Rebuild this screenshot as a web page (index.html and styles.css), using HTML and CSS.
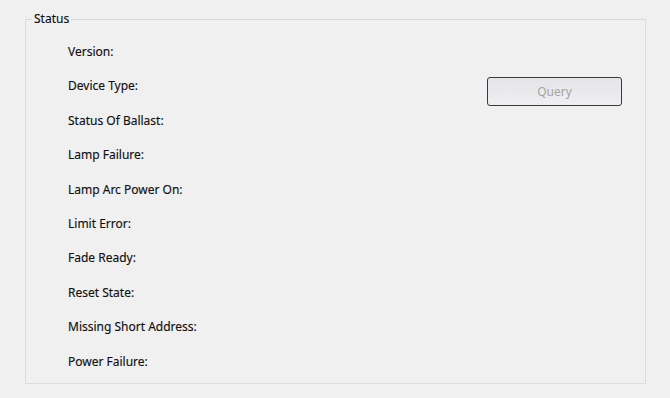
FILE: index.html
```html
<!DOCTYPE html>
<html>
<head>
<meta charset="utf-8">
<link rel="stylesheet" href="styles.css">
</head>
<body>
<div class="page">
  <fieldset class="status">
    <legend class="status-title">Status</legend>
    <div class="status-body">
      <ul class="fields">
        <li>Version:</li>
        <li>Device Type:</li>
        <li>Status Of Ballast:</li>
        <li>Lamp Failure:</li>
        <li>Lamp Arc Power On:</li>
        <li>Limit Error:</li>
        <li>Fade Ready:</li>
        <li>Reset State:</li>
        <li>Missing Short Address:</li>
        <li>Power Failure:</li>
      </ul>
      <button class="query" disabled>Query</button>
    </div>
  </fieldset>
</div>
</body>
</html>
```
FILE: styles.css
```css
html, body {
  margin: 0;
  padding: 0;
  background: #f0f0f0;
  font-family: "Noto Sans", "Open Sans", sans-serif;
  font-size: 12px;
  color: #000;
}
.page {
  width: 670px;
  height: 398px;
  padding: 11px 0 0 25px;
  box-sizing: border-box;
}
.status {
  margin: 0;
  padding: 0;
  min-width: 0;
  width: 621px;
  height: 373px;
  box-sizing: border-box;
  border: 1px solid #dcdcdc;
  border-top-color: #d8d8d8;
}
.status-title {
  margin-left: 6px;
  padding: 0 2px;
  line-height: 16px;
  height: 16px;
  color: #111;
  -webkit-text-stroke: 0.15px #111;
}
.status-body {
  display: flex;
  align-items: flex-start;
}
.fields {
  list-style: none;
  margin: 0;
  padding: 17px 0 0 42px;
  display: flex;
  flex-direction: column;
  gap: 18.4px;
}
.fields li {
  line-height: 16px;
  height: 16px;
  white-space: nowrap;
  color: #111;
  -webkit-text-stroke: 0.15px #111;
}
.query {
  margin: 50px 23px 0 auto;
  width: 135px;
  height: 29px;
  box-sizing: border-box;
  border: 1px solid #3a3a3a;
  border-radius: 3px;
  background: linear-gradient(#e4e4e9, #efeff1);
  color: #a3a3a3;
  font-family: inherit;
  font-size: 12px;
  padding: 0;
}
```
